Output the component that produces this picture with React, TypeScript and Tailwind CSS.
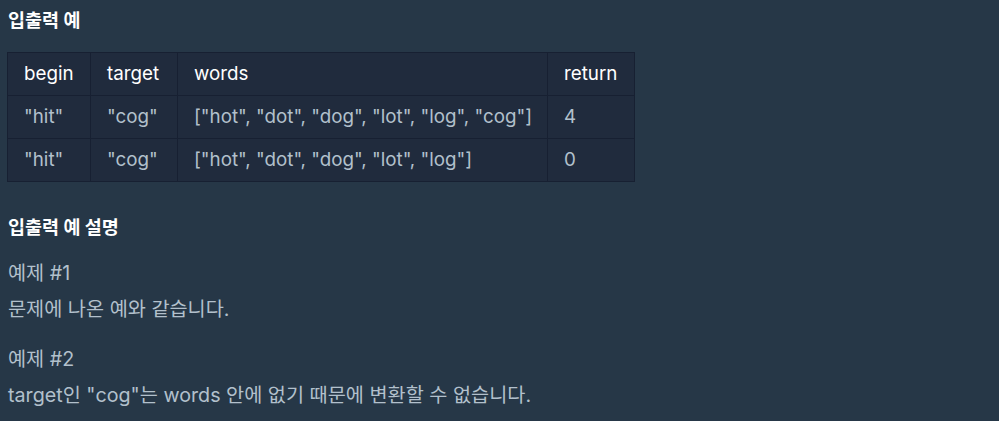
const rows = [
  { begin: '"hit"', target: '"cog"', words: '["hot", "dot", "dog", "lot", "log", "cog"]', ret: "4" },
  { begin: '"hit"', target: '"cog"', words: '["hot", "dot", "dog", "lot", "log"]', ret: "0" },
];

const font = { fontFamily: 'Inter, "Noto Sans CJK KR", sans-serif' };

export default function App() {
  return (
    <div className="min-h-screen w-full bg-[#263747] px-2 pt-[8px] text-[#b2c0cc]" style={font}>
      <h5 className="text-[18.5px] font-bold leading-[24px] text-white">입출력 예</h5>

      <table className="mt-5 ml-[-1px] w-[627px] table-fixed border-collapse whitespace-nowrap bg-[#202b3d] text-[18.8px]">
        <thead>
          <tr className="h-[43px]">
            <th className="w-[83px] border border-[#172032] px-4 text-left font-normal text-white">begin</th>
            <th className="w-[87px] border border-[#172032] px-4 text-left font-normal text-white">target</th>
            <th className="w-[370px] border border-[#172032] px-4 text-left font-normal text-white">words</th>
            <th className="w-[87px] border border-[#172032] px-4 text-left font-normal text-white">return</th>
          </tr>
        </thead>
        <tbody>
          {rows.map((r, i) => (
            <tr key={i} className="h-[43px]">
              <td className="border border-[#172032] px-4">{r.begin}</td>
              <td className="border border-[#172032] px-4">{r.target}</td>
              <td className="border border-[#172032] px-4">{r.words}</td>
              <td className="border border-[#172032] px-4">{r.ret}</td>
            </tr>
          ))}
        </tbody>
      </table>

      <h5 className="mt-[33px] text-[18.5px] font-bold leading-[24px] text-white">입출력 예 설명</h5>

      <p className="mt-[16px] text-[19.7px] leading-[36px]">
        예제 #1
        <br />
        문제에 나온 예와 같습니다.
      </p>
      <p className="mt-[14px] text-[19.7px] leading-[36px]">
        예제 #2
        <br />
        target인 "cog"는 words 안에 없기 때문에 변환할 수 없습니다.
      </p>
    </div>
  );
}
